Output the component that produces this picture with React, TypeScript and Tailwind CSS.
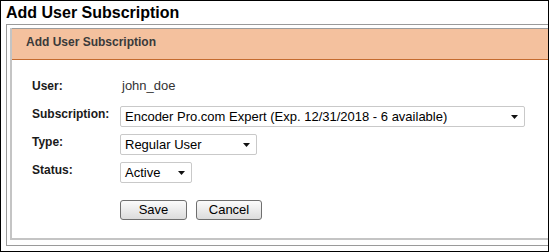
function Caret() {
  return (
    <svg width="7" height="4" viewBox="0 0 7 4" className="shrink-0">
      <path d="M0 0h7L3.5 4z" fill="#111" />
    </svg>
  )
}

function FakeSelect({ value, width }: { value: string; width: string }) {
  return (
    <div
      className={`${width} h-[21px] flex items-center justify-between pl-[4px] pr-[6px] border border-[#c9c9c9] rounded-[2px] bg-white text-[13px] text-black`}
    >
      <span className="whitespace-nowrap">{value}</span>
      <Caret />
    </div>
  )
}

function Btn({ label, width }: { label: string; width: string }) {
  return (
    <button
      type="button"
      className={`${width} h-[20px] border border-[#6f6f6f] rounded-[3px] bg-gradient-to-b from-[#fbfbfb] to-[#dcdcdc] text-[13px] leading-[18px] text-black`}
    >
      {label}
    </button>
  )
}

export default function App() {
  return (
    <div className="w-[549px] h-[252px] border border-black overflow-hidden bg-white font-['Liberation_Sans',Arial,sans-serif]">
      <h1 className="pl-[5px] h-[23px] leading-[23px] text-[16px] font-bold text-black">
        Add User Subscription
      </h1>

      <div className="ml-[5px] w-[600px] border border-[#9a9a9a] pt-[3px] pl-[3px] pb-[5px]">
        <div className="border-l-2 border-b-2 border-[#c4c4c4]">
          {/* header band */}
          <div className="h-[32px] border-t border-b border-t-[#9c9c9c] border-b-[#c46b2f] bg-[#f4c19e] pl-[14px] pt-[5px] text-[12px] leading-[16px] font-bold text-[#3a3a3a]">
            Add User Subscription
          </div>

          {/* form */}
          <div className="pl-[20px] pt-[18px] pb-[18px]">
            <div className="grid grid-cols-[88px_auto] gap-y-[7px] items-start">
              <div className="h-[21px] text-[12px] leading-[16px] font-bold text-[#1a1a1a]">User:</div>
              <div className="pl-[2px] text-[13px] leading-[16px] text-[#333]">john_doe</div>

              <div className="text-[12px] leading-[16px] font-bold text-[#1a1a1a]">Subscription:</div>
              <FakeSelect width="w-[405px]" value="Encoder Pro.com Expert (Exp. 12/31/2018 - 6 available)" />

              <div className="text-[12px] leading-[16px] font-bold text-[#1a1a1a]">Type:</div>
              <FakeSelect width="w-[137px]" value="Regular User" />

              <div className="text-[12px] leading-[16px] font-bold text-[#1a1a1a]">Status:</div>
              <FakeSelect width="w-[72px]" value="Active" />
            </div>

            <div className="mt-[17px] ml-[88px] flex gap-[9px]">
              <Btn label="Save" width="w-[67px]" />
              <Btn label="Cancel" width="w-[66px]" />
            </div>
          </div>
        </div>
      </div>
    </div>
  )
}
